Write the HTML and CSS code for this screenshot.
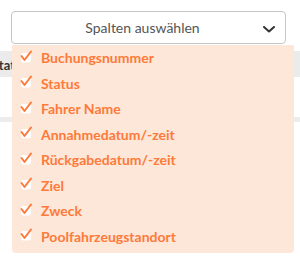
FILE: index.html
```html
<!DOCTYPE html>
<html>
<head>
    <title>Spalten auswählen</title>
    <link rel="stylesheet" href="styles.css">
</head>
<body>
    <div class="page">
        <div class="picker">
            <div class="select-box">
                <span class="select-label">Spalten auswählen</span>
                <svg class="chevron" width="12" height="7" viewBox="0 0 12 7">
                    <path d="M1 1 L6 5.5 L11 1" fill="none" stroke="#333" stroke-width="2" stroke-linecap="round" stroke-linejoin="round"/>
                </svg>
            </div>

            <ul class="menu">
                <li class="menu-item"><svg class="check" width="13" height="13" viewBox="0 0 13 13"><rect x="1" y="3" width="10" height="9.5" rx="2" fill="#fff"/><path d="M1.5 6 L4.5 10 L11 1.5" fill="none" stroke="#fd7a3a" stroke-width="2" stroke-linecap="round" stroke-linejoin="round"/></svg>Buchungsnummer</li>
                <li class="menu-item"><svg class="check" width="13" height="13" viewBox="0 0 13 13"><rect x="1" y="3" width="10" height="9.5" rx="2" fill="#fff"/><path d="M1.5 6 L4.5 10 L11 1.5" fill="none" stroke="#fd7a3a" stroke-width="2" stroke-linecap="round" stroke-linejoin="round"/></svg>Status</li>
                <li class="menu-item"><svg class="check" width="13" height="13" viewBox="0 0 13 13"><rect x="1" y="3" width="10" height="9.5" rx="2" fill="#fff"/><path d="M1.5 6 L4.5 10 L11 1.5" fill="none" stroke="#fd7a3a" stroke-width="2" stroke-linecap="round" stroke-linejoin="round"/></svg>Fahrer Name</li>
                <li class="menu-item"><svg class="check" width="13" height="13" viewBox="0 0 13 13"><rect x="1" y="3" width="10" height="9.5" rx="2" fill="#fff"/><path d="M1.5 6 L4.5 10 L11 1.5" fill="none" stroke="#fd7a3a" stroke-width="2" stroke-linecap="round" stroke-linejoin="round"/></svg>Annahmedatum/-zeit</li>
                <li class="menu-item"><svg class="check" width="13" height="13" viewBox="0 0 13 13"><rect x="1" y="3" width="10" height="9.5" rx="2" fill="#fff"/><path d="M1.5 6 L4.5 10 L11 1.5" fill="none" stroke="#fd7a3a" stroke-width="2" stroke-linecap="round" stroke-linejoin="round"/></svg>Rückgabedatum/-zeit</li>
                <li class="menu-item"><svg class="check" width="13" height="13" viewBox="0 0 13 13"><rect x="1" y="3" width="10" height="9.5" rx="2" fill="#fff"/><path d="M1.5 6 L4.5 10 L11 1.5" fill="none" stroke="#fd7a3a" stroke-width="2" stroke-linecap="round" stroke-linejoin="round"/></svg>Ziel</li>
                <li class="menu-item"><svg class="check" width="13" height="13" viewBox="0 0 13 13"><rect x="1" y="3" width="10" height="9.5" rx="2" fill="#fff"/><path d="M1.5 6 L4.5 10 L11 1.5" fill="none" stroke="#fd7a3a" stroke-width="2" stroke-linecap="round" stroke-linejoin="round"/></svg>Zweck</li>
                <li class="menu-item"><svg class="check" width="13" height="13" viewBox="0 0 13 13"><rect x="1" y="3" width="10" height="9.5" rx="2" fill="#fff"/><path d="M1.5 6 L4.5 10 L11 1.5" fill="none" stroke="#fd7a3a" stroke-width="2" stroke-linecap="round" stroke-linejoin="round"/></svg>Poolfahrzeugstandort</li>
            </ul>
        </div>

        <!-- table behind the open menu -->
        <div class="bg-table">
            <div class="bg-head">Status</div>
            <div class="bg-row"></div>
            <div class="bg-band"></div>
        </div>
    </div>
</body>
</html>
```

FILE: styles.css
```css
body {
    margin: 0;
    background: #fff;
    font-family: Lato, "Open Sans", sans-serif;
}

.page {
    width: 300px;
    height: 265px;
    overflow: hidden;
}

.picker {
    position: relative;
    margin: 11px 14px 0 11px;
    z-index: 2;
}

.select-box {
    height: 31px;
    border: 1px solid #c6c6c6;
    border-radius: 4px;
    background: #fff;
    display: flex;
    align-items: center;
    justify-content: center;
    padding: 0 24px 0 12px;
    position: relative;
}

.select-label {
    color: #555;
    font-size: 14px;
}

.chevron {
    position: absolute;
    right: 10px;
    top: 14px;
}

.menu {
    position: absolute;
    top: 100%;
    left: 1px;
    right: -8px;
    margin: 1px 0 0;
    padding: 0 0 4px;
    list-style: none;
    background: #fde7d8;
    border-radius: 0 0 4px 4px;
}

.menu-item {
    height: 25.5px;
    display: flex;
    align-items: center;
    padding-left: 8px;
    color: #fd7a3a;
    font-size: 14px;
    font-weight: bold;
}

.check {
    margin-right: 8px;
    margin-top: -3px;
}

.bg-table {
    margin-top: 7px;
}

.bg-head {
    height: 26px;
    line-height: 28px;
    background: #ebebeb;
    color: #333;
    font-size: 13px;
    font-weight: bold;
    text-indent: -8px;
}

.bg-row {
    height: 40px;
}

.bg-band {
    height: 5px;
    background: #ececec;
}
```
